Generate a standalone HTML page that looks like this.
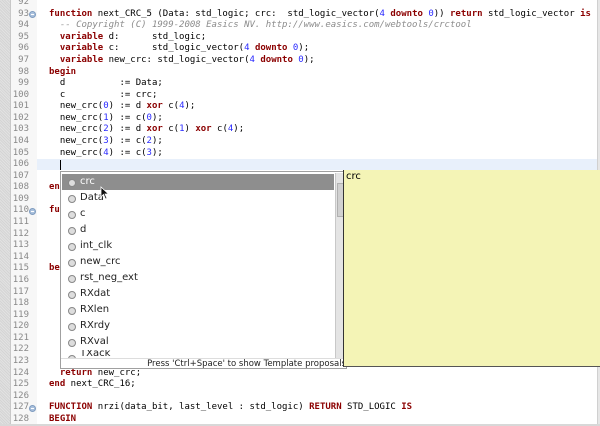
<!DOCTYPE html>
<html><head><style>
*{margin:0;padding:0;box-sizing:border-box}
body{width:600px;height:426px;overflow:hidden;background:#fff;position:relative;font-family:"DejaVu Sans Mono","Liberation Mono",monospace;font-size:9px;color:#000}
#strip{position:absolute;left:0;top:0;width:11px;height:426px;background:repeating-linear-gradient(45deg,#d4d4d4 0 1px,#e2e2e2 1px 2px);border-right:1px solid #c8c8c8}
#nums{position:absolute;left:11px;top:0;width:26px;height:426px;background:#f7f7f7}
#hl{position:absolute;left:37px;top:159px;width:560px;height:11px;background:#e8f0fb}
#rsb{position:absolute;left:597px;top:0;width:3px;height:426px;background:#e6e6e6;border-left:1px solid #d0d0d0}
#bot{position:absolute;left:0;top:424px;width:600px;height:2px;background:#d8d8d8}
.ln{position:absolute;left:11px;width:18px;text-align:right;color:#888;height:11.58px;line-height:11.58px}
.cd{position:absolute;left:49px;white-space:pre;height:11.58px;line-height:11.58px}
.k{color:#8b0000;font-weight:bold}
.n{color:#2a2aff}
.c{color:#8c8c8c;font-style:italic}
.fold{position:absolute;left:29px;width:7px;height:7px;border-radius:50%;background:#a9c0dc;border:1px solid #7f9cc0}
.fold:after{content:"";position:absolute;left:1px;top:2px;width:3px;height:1px;background:#fff}
#pop{position:absolute;left:60px;top:171px;width:287px;height:198px;background:#fff;border:1px solid #a0a0a0;font-family:"DejaVu Sans","Liberation Sans",sans-serif;font-size:10px}
.it{position:absolute;left:1px;width:272px;height:16px;line-height:16px;padding-left:18px;color:#222}
.it:before{content:"";position:absolute;left:6px;top:5px;width:6px;height:6px;border-radius:50%;border:1px solid #888;background:#ddd}
.sel{background:#8e8e8e;color:#fff}
#sb{position:absolute;left:274px;top:1px;width:11px;height:186px;background:#e4e4e4;border-left:1px solid #c8c8c8}
#status{position:absolute;left:0;top:186px;width:285px;height:11px;line-height:11px;text-align:right;padding-right:0;color:#222;border-top:1px solid #ddd;font-family:"DejaVu Sans",sans-serif;font-size:8.5px}
#info{position:absolute;left:343px;top:170px;width:257px;height:197px;background:#f4f4b6;border-left:1px solid #333;border-bottom:1px solid #555;font-family:"DejaVu Sans","Liberation Sans",sans-serif;font-size:10px;padding:1px 2px}
</style></head><body>
<div id="strip"></div><div id="nums"></div><div id="hl"></div><div id="rsb"></div><div id="bot"></div>
<div class="ln" style="top:-3px">92</div>
<div class="ln" style="top:8.6px">93</div>
<div class="ln" style="top:20.2px">94</div>
<div class="ln" style="top:31.7px">95</div>
<div class="ln" style="top:43.3px">96</div>
<div class="ln" style="top:54.9px">97</div>
<div class="ln" style="top:66.5px">98</div>
<div class="ln" style="top:78.1px">99</div>
<div class="ln" style="top:89.6px">100</div>
<div class="ln" style="top:101.2px">101</div>
<div class="ln" style="top:112.8px">102</div>
<div class="ln" style="top:124.4px">103</div>
<div class="ln" style="top:135.9px">104</div>
<div class="ln" style="top:147.5px">105</div>
<div class="ln" style="top:159.1px">106</div>
<div class="ln" style="top:170.7px">107</div>
<div class="ln" style="top:182.3px">108</div>
<div class="ln" style="top:193.8px">109</div>
<div class="ln" style="top:205.4px">110</div>
<div class="ln" style="top:217px">111</div>
<div class="ln" style="top:228.6px">112</div>
<div class="ln" style="top:240.2px">113</div>
<div class="ln" style="top:251.7px">114</div>
<div class="ln" style="top:263.3px">115</div>
<div class="ln" style="top:274.9px">116</div>
<div class="ln" style="top:286.5px">117</div>
<div class="ln" style="top:298px">118</div>
<div class="ln" style="top:309.6px">119</div>
<div class="ln" style="top:321.2px">120</div>
<div class="ln" style="top:332.8px">121</div>
<div class="ln" style="top:344.4px">122</div>
<div class="ln" style="top:355.9px">123</div>
<div class="ln" style="top:367.5px">124</div>
<div class="ln" style="top:379.1px">125</div>
<div class="ln" style="top:390.7px">126</div>
<div class="ln" style="top:402.2px">127</div>
<div class="ln" style="top:413.8px">128</div>
<div class="fold" style="top:11px"></div>
<div class="fold" style="top:208px"></div>
<div class="fold" style="top:405px"></div>

<div class="cd" style="top:8.6px"><span class="k">function</span> next_CRC_5 (Data: std_logic; crc:  std_logic_vector(<span class="n">4</span> <span class="k">downto</span> <span class="n">0</span>)) <span class="k">return</span> std_logic_vector <span class="k">is</span></div>
<div class="cd c" style="top:20.2px">  -- Copyright (C) 1999-2008 Easics NV. http://www.easics.com/webtools/crctool</div>
<div class="cd" style="top:31.7px">  <span class="k">variable</span> d:      std_logic;</div>
<div class="cd" style="top:43.3px">  <span class="k">variable</span> c:      std_logic_vector(<span class="n">4</span> <span class="k">downto</span> <span class="n">0</span>);</div>
<div class="cd" style="top:54.9px">  <span class="k">variable</span> new_crc: std_logic_vector(<span class="n">4</span> <span class="k">downto</span> <span class="n">0</span>);</div>
<div class="cd" style="top:66.5px"><span class="k">begin</span></div>
<div class="cd" style="top:78.1px">  d          := Data;</div>
<div class="cd" style="top:89.6px">  c          := crc;</div>
<div class="cd" style="top:101.2px">  new_crc(<span class="n">0</span>) := d <span class="k">xor</span> c(<span class="n">4</span>);</div>
<div class="cd" style="top:112.8px">  new_crc(<span class="n">1</span>) := c(<span class="n">0</span>);</div>
<div class="cd" style="top:124.4px">  new_crc(<span class="n">2</span>) := d <span class="k">xor</span> c(<span class="n">1</span>) <span class="k">xor</span> c(<span class="n">4</span>);</div>
<div class="cd" style="top:135.9px">  new_crc(<span class="n">3</span>) := c(<span class="n">2</span>);</div>
<div class="cd" style="top:147.5px">  new_crc(<span class="n">4</span>) := c(<span class="n">3</span>);</div>
<div style="position:absolute;left:60px;top:160px;width:1px;height:10px;background:#000"></div>
<div class="cd" style="top:182.3px"><span class="k">end</span> next_CRC_5;</div>
<div class="cd" style="top:205.4px"><span class="k">function</span></div>
<div class="cd" style="top:263.3px"><span class="k">begin</span></div>
<div class="cd" style="top:367.5px">  <span class="k">return</span> new_crc;</div>
<div class="cd" style="top:379.1px"><span class="k">end</span> next_CRC_16;</div>
<div class="cd" style="top:402.2px"><span class="k">FUNCTION</span> nrzi(data_bit, last_level : std_logic) <span class="k">RETURN</span> STD_LOGIC <span class="k">IS</span></div>
<div class="cd" style="top:413.8px"><span class="k">BEGIN</span></div>

<div id="pop">
<div class="it sel" style="top:2px">crc</div>
<div class="it" style="top:18px">Data</div>
<div class="it" style="top:34px">c</div>
<div class="it" style="top:50px">d</div>
<div class="it" style="top:66px">int_clk</div>
<div class="it" style="top:82px">new_crc</div>
<div class="it" style="top:98px">rst_neg_ext</div>
<div class="it" style="top:114px">RXdat</div>
<div class="it" style="top:130px">RXlen</div>
<div class="it" style="top:146px">RXrdy</div>
<div class="it" style="top:162px">RXval</div>
<div class="it" style="top:178px;height:8px;overflow:hidden;line-height:8px">TXack</div>
<div id="sb"><div style="position:absolute;left:1px;top:10px;width:8px;height:34px;background:#d0d0d0;border:1px solid #b0b0b0"></div></div>
<div id="status">Press 'Ctrl+Space' to show Template proposals</div>
</div>
<svg style="position:absolute;left:100px;top:186px" width="10" height="14"><path d="M1 1 L1 11 L3.5 8.5 L5.5 13 L7 12.3 L5 8 L8.5 8 Z" fill="#111" stroke="#fff" stroke-width="0.8"/></svg>
<div id="info">crc</div>
</body></html>
